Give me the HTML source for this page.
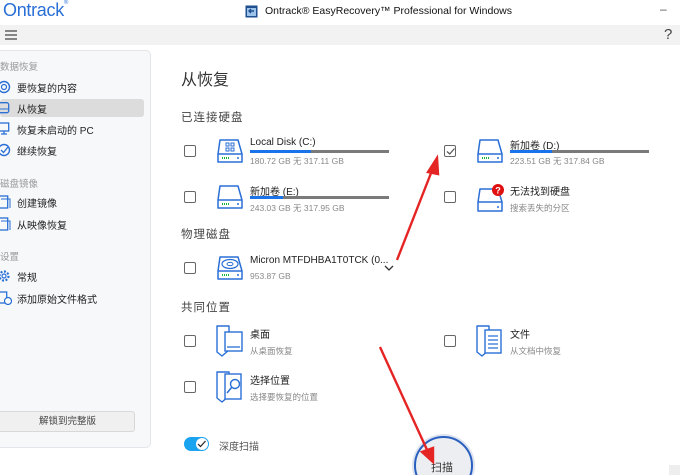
<!DOCTYPE html>
<html><head><meta charset="utf-8"><style>
*{margin:0;padding:0;box-sizing:border-box}
html,body{width:680px;height:475px;overflow:hidden}
body{background:#fff;font-family:"Liberation Sans","Noto Sans CJK SC",sans-serif;position:relative;color:#222}
.a{position:absolute;white-space:nowrap}
.cb{position:absolute;width:12px;height:12px;border:1.3px solid #666;border-radius:2px}
.t{font-size:10px;color:#222}
.s{font-size:8.5px;color:#888}
.bar{position:absolute;height:3px;background:#7a7a7a}
.bar i{display:block;height:3px;background:#1a73e8}
.si{font-size:10px;color:#222}
.sh{font-size:9.5px;color:#999}
</style></head><body>
<div class="a" style="left:3px;top:0px;font-size:18px;color:#2a6fd6;letter-spacing:-0.3px">Ontrack<span style="font-size:6px;vertical-align:top">®</span></div>
<svg class="a" style="left:245px;top:5px" width="13" height="13"><rect x="0.5" y="0.5" width="12" height="12" fill="#1f4f8f"/><rect x="2" y="3" width="9" height="8" fill="#9cc3ea"/><path d="M9 6 L4 6 M6 4 L4 6 L6 8" stroke="#1f4f8f" stroke-width="1.4" fill="none"/></svg>
<div class="a" style="left:265px;top:5px;font-size:10.5px;color:#111">Ontrack® EasyRecovery™ Professional for Windows</div>
<div class="a" style="left:660px;top:2px;font-size:12px;color:#555">–</div>
<div class="a" style="left:0;top:25px;width:680px;height:20px;background:#f2f2f2"></div>
<svg class="a" style="left:5px;top:30px" width="12" height="10"><path d="M0 1H12M0 5H12M0 9H12" stroke="#444" stroke-width="1.3"/></svg>
<div class="a" style="left:664px;top:26px;font-size:15px;color:#444">?</div>

<div class="a" style="left:-8px;top:50px;width:159px;height:398px;background:#f7f8fa;border:1px solid #e3e5ea;border-radius:5px"></div>
<div class="a sh" style="left:0;top:59px">数据恢复</div>
<div class="a" style="left:0;top:99px;width:144px;height:18px;background:#dcdcdc;border-radius:3px"></div>
<svg class="a" style="left:-2px;top:80px" width="14" height="14"><circle cx="6" cy="7" r="5.5" fill="none" stroke="#2a6fd6" stroke-width="1.4"/><circle cx="6" cy="7" r="2.5" fill="none" stroke="#2a6fd6" stroke-width="1.2"/></svg>
<div class="a si" style="left:17px;top:80px">要恢复的内容</div>
<svg class="a" style="left:-2px;top:102px" width="14" height="12"><rect x="0.7" y="0.7" width="10" height="10" rx="2" fill="none" stroke="#2a6fd6" stroke-width="1.3"/><path d="M0 7H11" stroke="#2a6fd6"/></svg>
<div class="a si" style="left:17px;top:101px">从恢复</div>
<svg class="a" style="left:-2px;top:122px" width="14" height="14"><rect x="0.7" y="1" width="10" height="8" fill="none" stroke="#2a6fd6" stroke-width="1.3"/><path d="M6 9V12M3 12H9" stroke="#2a6fd6" stroke-width="1.3"/></svg>
<div class="a si" style="left:17px;top:122px">恢复未启动的 PC</div>
<svg class="a" style="left:-2px;top:143px" width="14" height="14"><circle cx="6" cy="7" r="5.5" fill="none" stroke="#2a6fd6" stroke-width="1.4"/><path d="M3 7L5.5 9.5L10 4" stroke="#2a6fd6" stroke-width="1.3" fill="none"/></svg>
<div class="a si" style="left:17px;top:143px">继续恢复</div>
<div class="a sh" style="left:0;top:176px">磁盘镜像</div>
<svg class="a" style="left:-2px;top:195px" width="14" height="14"><rect x="0.7" y="1" width="9" height="12" fill="none" stroke="#2a6fd6" stroke-width="1.3"/><path d="M3 4H12V13" fill="none" stroke="#2a6fd6"/></svg>
<div class="a si" style="left:17px;top:195px">创建镜像</div>
<svg class="a" style="left:-2px;top:217px" width="14" height="14"><rect x="0.7" y="1" width="9" height="12" fill="none" stroke="#2a6fd6" stroke-width="1.3"/><path d="M3 4H12V13" fill="none" stroke="#2a6fd6"/></svg>
<div class="a si" style="left:17px;top:217px">从映像恢复</div>
<div class="a sh" style="left:0;top:249px">设置</div>
<svg class="a" style="left:-2px;top:269px" width="14" height="14"><circle cx="6" cy="7" r="4.5" fill="none" stroke="#2a6fd6" stroke-width="2.2" stroke-dasharray="2 1.5"/><circle cx="6" cy="7" r="2" fill="none" stroke="#2a6fd6" stroke-width="1.2"/></svg>
<div class="a si" style="left:17px;top:269px">常规</div>
<svg class="a" style="left:-2px;top:291px" width="14" height="14"><rect x="0.7" y="1" width="8" height="11" fill="none" stroke="#2a6fd6" stroke-width="1.3"/><circle cx="10" cy="10" r="3.5" fill="#fff" stroke="#2a6fd6" stroke-width="1.2"/></svg>
<div class="a si" style="left:17px;top:291px">添加原始文件格式</div>
<div class="a" style="left:-6px;top:411px;width:141px;height:21px;background:#f0f0f0;border:1px solid #d8d8d8;border-radius:3px;font-size:9.5px;color:#444;text-align:center;line-height:19px;padding-left:6px">解锁到完整版</div>

<div class="a" style="left:181px;top:66px;font-size:16px;color:#333">从恢复</div>
<div class="a" style="left:181px;top:109px;font-size:11.5px;color:#444;letter-spacing:1px">已连接硬盘</div>

<div class="cb" style="left:184px;top:145px"></div>
<svg class="a" style="left:216px;top:138px" width="28" height="27"><path d="M4 2H22L26 16V24H2V16Z" fill="#fff" stroke="#2a6fd6" stroke-width="1.5" stroke-linejoin="round"/><path d="M2 16H26" stroke="#2a6fd6" stroke-width="1.5"/><path d="M6 20H13" stroke="#1db33c" stroke-width="2" stroke-dasharray="1 1"/><circle cx="22" cy="20" r="1" fill="#2a6fd6"/><path d="M10 5h3v3h-3zM15 5h3v3h-3zM10 10h3v3h-3zM15 10h3v3h-3z" fill="none" stroke="#2a6fd6" stroke-width="1"/></svg>
<div class="a t" style="left:250px;top:137px">Local Disk (C:)</div>
<div class="bar" style="left:250px;top:150px;width:139px"><i style="width:61px"></i></div>
<div class="a s" style="left:250px;top:155px">180.72 GB 无 317.11 GB</div>

<div class="cb" style="left:444px;top:145px"></div>
<svg class="a" style="left:446px;top:147px" width="10" height="9"><path d="M1 4.5L3.7 7L8.5 1.5" stroke="#555" stroke-width="1.2" fill="none"/></svg>
<svg class="a" style="left:476px;top:138px" width="28" height="27"><path d="M4 2H22L26 16V24H2V16Z" fill="#fff" stroke="#2a6fd6" stroke-width="1.5" stroke-linejoin="round"/><path d="M2 16H26" stroke="#2a6fd6" stroke-width="1.5"/><path d="M6 20H13" stroke="#1db33c" stroke-width="2" stroke-dasharray="1 1"/><circle cx="22" cy="20" r="1" fill="#2a6fd6"/></svg>
<div class="a t" style="left:510px;top:137px">新加卷 (D:)</div>
<div class="bar" style="left:510px;top:150px;width:139px"><i style="width:42px"></i></div>
<div class="a s" style="left:510px;top:155px">223.51 GB 无 317.84 GB</div>

<div class="cb" style="left:184px;top:191px"></div>
<svg class="a" style="left:216px;top:184px" width="28" height="27"><path d="M4 2H22L26 16V24H2V16Z" fill="#fff" stroke="#2a6fd6" stroke-width="1.5" stroke-linejoin="round"/><path d="M2 16H26" stroke="#2a6fd6" stroke-width="1.5"/><path d="M6 20H13" stroke="#1db33c" stroke-width="2" stroke-dasharray="1 1"/><circle cx="22" cy="20" r="1" fill="#2a6fd6"/></svg>
<div class="a t" style="left:250px;top:183px">新加卷 (E:)</div>
<div class="bar" style="left:250px;top:196px;width:139px"><i style="width:33px"></i></div>
<div class="a s" style="left:250px;top:202px">243.03 GB 无 317.95 GB</div>

<div class="cb" style="left:444px;top:191px"></div>
<svg class="a" style="left:476px;top:184px" width="30" height="30"><path d="M4 5H22L26 18V27H2V18Z" fill="#fff" stroke="#2a6fd6" stroke-width="1.5" stroke-linejoin="round"/><path d="M2 18H26" stroke="#2a6fd6" stroke-width="1.5"/><circle cx="22" cy="23" r="1" fill="#2a6fd6"/><circle cx="22" cy="6" r="6" fill="#e01010"/><text x="22" y="9.5" font-size="9" font-weight="bold" fill="#fff" text-anchor="middle" font-family="Liberation Sans">?</text></svg>
<div class="a t" style="left:510px;top:183px">无法找到硬盘</div>
<div class="a s" style="left:510px;top:202px">搜索丢失的分区</div>

<div class="a" style="left:181px;top:226px;font-size:11.5px;color:#444;letter-spacing:1px">物理磁盘</div>
<div class="cb" style="left:184px;top:262px"></div>
<svg class="a" style="left:216px;top:255px" width="28" height="27"><path d="M4 2H22L26 16V24H2V16Z" fill="#fff" stroke="#2a6fd6" stroke-width="1.5" stroke-linejoin="round"/><path d="M2 16H26" stroke="#2a6fd6" stroke-width="1.5"/><ellipse cx="14" cy="9" rx="8" ry="4.5" fill="none" stroke="#2a6fd6" stroke-width="1.2"/><ellipse cx="14" cy="9" rx="3" ry="1.6" fill="none" stroke="#2a6fd6"/><path d="M6 20H13" stroke="#1db33c" stroke-width="2" stroke-dasharray="1 1"/><circle cx="22" cy="20" r="1" fill="#2a6fd6"/></svg>
<div class="a t" style="left:250px;top:255px">Micron MTFDHBA1T0TCK (0...</div>
<div class="a s" style="left:250px;top:271px">953.87 GB</div>
<svg class="a" style="left:384px;top:265px" width="10" height="7"><path d="M1 1L5 5L9 1" stroke="#333" stroke-width="1.3" fill="none"/></svg>

<div class="a" style="left:181px;top:299px;font-size:11.5px;color:#444;letter-spacing:1px">共同位置</div>
<div class="cb" style="left:184px;top:335px"></div>
<svg class="a" style="left:216px;top:325px" width="30" height="32"><path d="M1 1H13V25L6 31L1 27Z" fill="#fff" stroke="#2a6fd6" stroke-width="1.4" stroke-linejoin="round"/><rect x="9" y="7" width="17" height="19" fill="#fff" stroke="#2a6fd6" stroke-width="1.4"/><path d="M11 22H24" stroke="#2a6fd6" stroke-width="1.3"/></svg>
<div class="a t" style="left:250px;top:326px">桌面</div>
<div class="a s" style="left:250px;top:345px">从桌面恢复</div>
<div class="cb" style="left:444px;top:335px"></div>
<svg class="a" style="left:476px;top:325px" width="30" height="32"><path d="M1 1H13V25L6 31L1 27Z" fill="#fff" stroke="#2a6fd6" stroke-width="1.4" stroke-linejoin="round"/><rect x="9" y="5" width="16" height="23" fill="#fff" stroke="#2a6fd6" stroke-width="1.4"/><path d="M12 11H22M12 15H22M12 19H22M12 23H22" stroke="#2a6fd6" stroke-width="1.2"/></svg>
<div class="a t" style="left:510px;top:326px">文件</div>
<div class="a s" style="left:510px;top:345px">从文档中恢复</div>
<div class="cb" style="left:184px;top:381px"></div>
<svg class="a" style="left:216px;top:371px" width="30" height="32"><path d="M1 1H13V25L6 31L1 27Z" fill="#fff" stroke="#2a6fd6" stroke-width="1.4" stroke-linejoin="round"/><rect x="9" y="3" width="16" height="25" fill="#fff" stroke="#2a6fd6" stroke-width="1.4"/><circle cx="19" cy="13" r="4.5" fill="#fff" stroke="#2a6fd6" stroke-width="1.4"/><path d="M16 16L11 22" stroke="#2a6fd6" stroke-width="1.5"/></svg>
<div class="a t" style="left:250px;top:372px">选择位置</div>
<div class="a s" style="left:250px;top:391px">选择要恢复的位置</div>

<div class="a" style="left:184px;top:437px;width:25px;height:14px;background:#1aa3ef;border-radius:7px"></div>
<div class="a" style="left:196px;top:438px;width:12px;height:12px;background:#fff;border-radius:6px"></div>
<svg class="a" style="left:197px;top:440px" width="10" height="8"><path d="M1 4L3.5 6.5L8.5 1" stroke="#222" stroke-width="1.2" fill="none"/></svg>
<div class="a" style="left:219px;top:438px;font-size:10px;color:#555">深度扫描</div>

<div class="a" style="left:414px;top:436px;width:59px;height:59px;border-radius:50%;background:#eceef1;border:2px solid #2a5fc0;box-shadow:0 0 0 2px #dde3ef"></div>
<div class="a" style="left:431px;top:459px;font-size:11px;color:#333">扫描</div>
<div class="a" style="left:669px;top:465px;width:11px;height:10px;background:#eee"></div>

<svg class="a" style="left:0;top:0" width="680" height="475"><g stroke="#e52424" stroke-width="2.4" fill="#e52424"><path d="M397 260L433 168" fill="none"/><path d="M437 158L428 172L438 174Z"/><path d="M380 347L428 452" fill="none"/><path d="M433 462L422 452L433 448Z"/></g></svg>
</body></html>
